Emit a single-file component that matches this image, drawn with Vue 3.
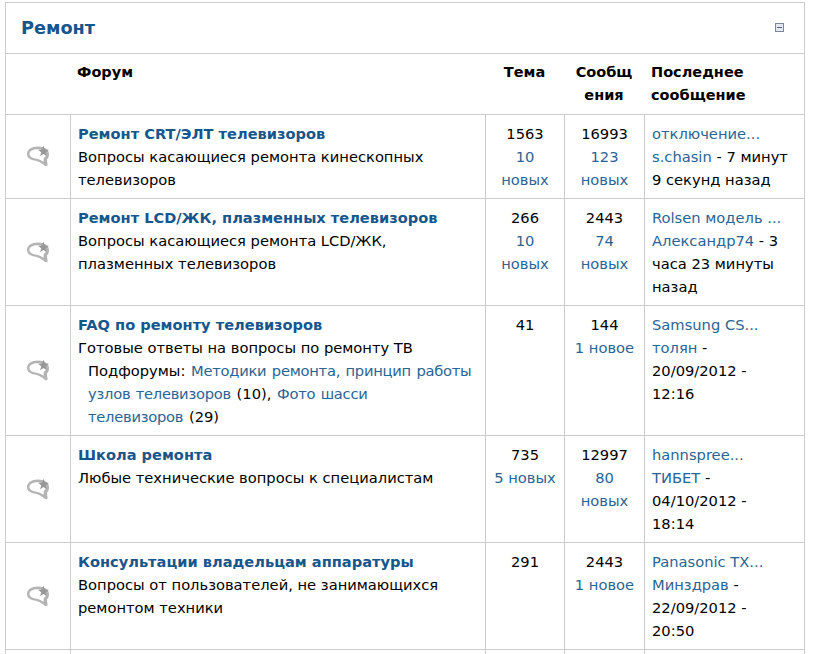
<script setup>
const forums = [
  { title: 'Ремонт CRT/ЭЛТ телевизоров', desc: 'Вопросы касающиеся ремонта кинескопных телевизоров', topics: '1563', newTopics: '10 новых', posts: '16993', newPosts: '123 новых', last: 'отключение...', author: 's.chasin', date: ' - 7 минут 9 секунд назад' },
  { title: 'Ремонт LCD/ЖК, плазменных телевизоров', desc: 'Вопросы касающиеся ремонта LCD/ЖК, плазменных телевизоров', topics: '266', newTopics: '10 новых', posts: '2443', newPosts: '74 новых', last: 'Rolsen модель ...', author: 'Александр74', date: ' - 3 часа 23 минуты назад' },
  { title: 'FAQ по ремонту телевизоров', desc: 'Готовые ответы на вопросы по ремонту ТВ', sub: true, topics: '41', newTopics: '', posts: '144', newPosts: '1 новое', last: 'Samsung CS...', author: 'толян', date: ' - 20/09/2012 - 12:16' },
  { title: 'Школа ремонта', desc: 'Любые технические вопросы к специалистам', topics: '735', newTopics: '5 новых', posts: '12997', newPosts: '80 новых', last: 'hannspree...', author: 'ТИБЕТ', date: ' - 04/10/2012 - 18:14' },
  { title: 'Консультации владельцам аппаратуры', desc: 'Вопросы от пользователей, не занимающихся ремонтом техники', topics: '291', newTopics: '', posts: '2443', newPosts: '1 новое', last: 'Panasonic TX...', author: 'Минздрав', date: ' - 22/09/2012 - 20:50' }
]
</script>

<template>
  <div class="page">
    <section class="box">
      <header class="head">
        <h2 class="title">Ремонт</h2>
        <svg class="toggle" width="9" height="9" viewBox="0 0 9 9">
          <rect x="0.5" y="0.5" width="8" height="8" fill="#e4e9f1" stroke="#7d8799" />
          <rect x="2" y="4" width="5" height="1" fill="#59647a" />
        </svg>
      </header>
      <table class="forums">
        <colgroup>
          <col class="c1" /><col class="c2" /><col class="c3" /><col class="c4" /><col class="c5" />
        </colgroup>
        <thead>
          <tr>
            <th></th>
            <th class="left">Форум</th>
            <th>Тема</th>
            <th class="brk">Сообщения</th>
            <th class="left">Последнее сообщение</th>
          </tr>
        </thead>
        <tbody>
          <tr v-for="f in forums" :key="f.title">
            <td class="ico">
              <svg width="24" height="23" viewBox="0 0 24 23">
                <path d="M12 1.500C5.500 1.500 1 4.500 1 9c0 3.500 3 5.800 7.500 6.500 4 .7 7.500 2.500 10.500 5.500 2 .8 2.800-.2 2.500-2-.3-1.500-.7-3-.5-4.500 1.500-1.500 2-3 2-5.500 0-4.500-4.500-7.500-11-7.500z" fill="#b4b4b4" />
                <path d="M11.500 4.200C7 4.200 3.400 6.200 3.400 9c0 2.300 2.600 3.900 5.900 4.400 3.300.5 6 1.600 8.500 3.400-.3-1.400-.3-2.700.1-4.100 1.600-1 2.300-2.200 2.300-3.700 0-3-4.200-4.800-8.700-4.800z" fill="#fff" />
                <polygon points="17.500,.7 18.900,4.560 23,4.700 19.780,7.240 20.900,11.200 17.500,8.900 14.100,11.200 15.220,7.240 12,4.700 16.100,4.560" fill="#979797" />
              </svg>
            </td>
            <td class="main">
              <a class="name">{{ f.title }}</a>
              <div>{{ f.desc }}</div>
              <div v-if="f.sub" class="subs">Подфорумы: <a class="sublink">Методики ремонта, принцип работы узлов телевизоров</a> (10), <a class="sublink">Фото шасси<br />телевизоров</a> (29)</div>
            </td>
            <td class="num">{{ f.topics }}<a v-if="f.newTopics" class="block">{{ f.newTopics }}</a></td>
            <td class="num">{{ f.posts }}<a v-if="f.newPosts" class="block">{{ f.newPosts }}</a></td>
            <td class="lastc">
              <a class="block">{{ f.last }}</a>
              <a>{{ f.author }}</a>{{ f.date }}
            </td>
          </tr>
          <tr class="tail">
            <td></td><td></td><td></td><td></td><td></td>
          </tr>
        </tbody>
      </table>
    </section>
  </div>
</template>

<style>
html, body { margin: 0; background: #fff; overflow: hidden; }
</style>

<style scoped>
.page {
  height: 654px;
  overflow: hidden;
  padding: 2px 0 0 5px;
  box-sizing: border-box;
  font-family: "DejaVu Sans", Verdana, sans-serif;
  font-size: 14.7px;
  line-height: 23px;
  color: #000;
}
.box {
  width: 800px;
  box-sizing: border-box;
  border: 1px solid #ccc;
}
.head {
  height: 51px;
  box-sizing: border-box;
  border-bottom: 1px solid #ccc;
  display: flex;
  align-items: center;
  justify-content: space-between;
  padding: 0 20px 0 15px;
}
.title {
  margin: 0;
  font-size: 17.7px;
  font-weight: bold;
  color: #17568c;
}
.toggle { margin-top: -2px; }
.forums {
  width: 798px;
  table-layout: fixed;
  border-collapse: separate;
  border-spacing: 0;
}
.c1 { width: 64px; }
.c2 { width: 415px; }
.c3 { width: 79px; }
.c4 { width: 80px; }
.c5 { width: 160px; }
th {
  padding: 7px;
  border-bottom: 1px solid #ccc;
  vertical-align: top;
  font-size: 14.5px;
  font-weight: bold;
  text-align: center;
}
th.left { text-align: left; }
th.brk { word-break: break-all; }
td {
  padding: 7px;
  border-bottom: 1px solid #ccc;
  border-left: 1px solid #ccc;
  vertical-align: top;
}
td:first-child { border-left: 0; }
.ico { padding: 0 0 0 20px; vertical-align: middle; }
.ico svg { display: block; }
.name { font-weight: bold; font-size: 14.6px; color: #17568c; display: block; }
a { color: #2a6496; }
.block { display: block; }
.subs { padding-left: 10px; word-spacing: 1px; }
.sublink { letter-spacing: -0.25px; }
.num { text-align: center; }
.lastc { padding-right: 13px; }
.tail td { height: 40px; }
</style>
